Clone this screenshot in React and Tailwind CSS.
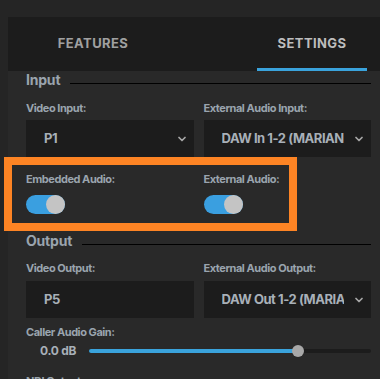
import React, { useState } from 'react';

const font = { fontFamily: 'Inter, "Liberation Sans", sans-serif' };

function Chevron() {
  return (
    <svg width="12" height="12" viewBox="0 0 24 24" fill="none" stroke="#a8a8a8" strokeWidth="3.5" strokeLinecap="round" strokeLinejoin="round">
      <path d="M6 9l6 6 6-6" />
    </svg>
  );
}

function SectionTitle({ title }) {
  return (
    <div className="flex items-center gap-[10px]">
      <span className="text-[14px] font-bold text-[#9aa4ae] leading-[18px] tracking-[-0.2px]">{title}</span>
      <div className="flex-1 h-px bg-black mt-[6px]" />
    </div>
  );
}

function Label({ children }) {
  return <div className="text-[11px] font-bold text-[#9aa4ae] leading-[14px] tracking-[-0.45px]">{children}</div>;
}

function SelectBox({ value, chevron }) {
  return (
    <div className="h-[37px] bg-[#1c1c1c] flex items-center pl-[18px] pr-[3px]">
      <span className="w-[122px] text-[13px] font-bold text-[#a8b0b8] whitespace-nowrap overflow-hidden tracking-[-0.45px]">
        {value}
      </span>
      <span className="flex-1" />
      {chevron && <Chevron />}
      <span className="w-[3px]" />
    </div>
  );
}

function Toggle({ on, onClick }) {
  return (
    <button onClick={onClick} className={`w-[39px] h-[19px] rounded-full flex items-center ${on ? 'bg-[#3a9fe0] justify-end' : 'bg-[#555] justify-start'}`}>
      <span className="w-[19px] h-[19px] rounded-full bg-[#c4c4c4]" />
    </button>
  );
}

export default function App() {
  const [tab, setTab] = useState('SETTINGS');
  const [embedded, setEmbedded] = useState(true);
  const [external, setExternal] = useState(true);

  return (
    <div className="w-[380px] h-[379px] overflow-hidden bg-[#252525] pt-[17px] pl-[8px]" style={font}>
      <div className="bg-[#292929] h-full">
        <div className="h-[54px] bg-[#1c1c1c] flex">
          <button onClick={() => setTab('FEATURES')} className="w-[170px] h-full relative text-[13px] font-bold tracking-[0.4px] text-[#a0a0a0]">
            FEATURES
            {tab === 'FEATURES' && <span className="absolute left-[30px] right-[30px] bottom-0 h-[3px] bg-[#3aa3dc]" />}
          </button>
          <button onClick={() => setTab('SETTINGS')} className="ml-[79px] w-[110px] h-full relative text-[13px] font-bold tracking-[0.4px] text-[#bdbdbd]">
            SETTINGS
            {tab === 'SETTINGS' && <span className="absolute left-0 right-0 bottom-0 h-[3px] bg-[#3aa3dc]" />}
          </button>
        </div>

        <div className="pl-[18px] pr-[9px] relative">
          <SectionTitle title="Input" />
          <div className="grid grid-cols-2 gap-x-[10px] mt-[12px]">
            <div>
              <Label>Video Input:</Label>
              <div className="mt-[5px]"><SelectBox value="P1" chevron /></div>
            </div>
            <div>
              <Label>External Audio Input:</Label>
              <div className="mt-[5px]"><SelectBox value="DAW In 1-2 (MARIAN" chevron /></div>
            </div>
          </div>

          <div className="grid grid-cols-2 gap-x-[10px] pt-[15px] h-[74px]">
            <div>
              <Label>Embedded Audio:</Label>
              <div className="mt-[9px]"><Toggle on={embedded} onClick={() => setEmbedded(!embedded)} /></div>
            </div>
            <div>
              <Label>External Audio:</Label>
              <div className="mt-[9px]"><Toggle on={external} onClick={() => setExternal(!external)} /></div>
            </div>
          </div>
          <div className="absolute left-[-4px] top-[86px] w-[293px] h-[74px] border-[8px] border-[#fd8424] pointer-events-none" />

          <div className="mt-[1px]">
            <SectionTitle title="Output" />
          </div>
          <div className="grid grid-cols-2 gap-x-[10px] mt-[11px]">
            <div>
              <Label>Video Output:</Label>
              <div className="mt-[6px]"><SelectBox value="P5" /></div>
            </div>
            <div>
              <Label>External Audio Output:</Label>
              <div className="mt-[6px]"><SelectBox value="DAW Out 1-2 (MARIAN" chevron /></div>
            </div>
          </div>

          <div className="mt-[7px]">
            <Label>Caller Audio Gain:</Label>
          </div>
          <div className="flex items-center mt-[4px] h-[16px]">
            <span className="w-[63px] pl-[14px] text-[12px] font-bold text-[#a8b0b8] tracking-[-0.3px]">0.0 dB</span>
            <div className="flex-1 h-[4px] rounded-full bg-[#1c1c1c] relative">
              <div className="h-full rounded-full bg-[#3aa3dc] w-[209px]" />
              <span className="absolute left-[203px] top-[-4px] w-[12px] h-[12px] rounded-full bg-[#a8a8a8]" />
            </div>
          </div>
          <div className="mt-[15px]">
            <Label>NDI Output:</Label>
          </div>
        </div>
      </div>
    </div>
  );
}
